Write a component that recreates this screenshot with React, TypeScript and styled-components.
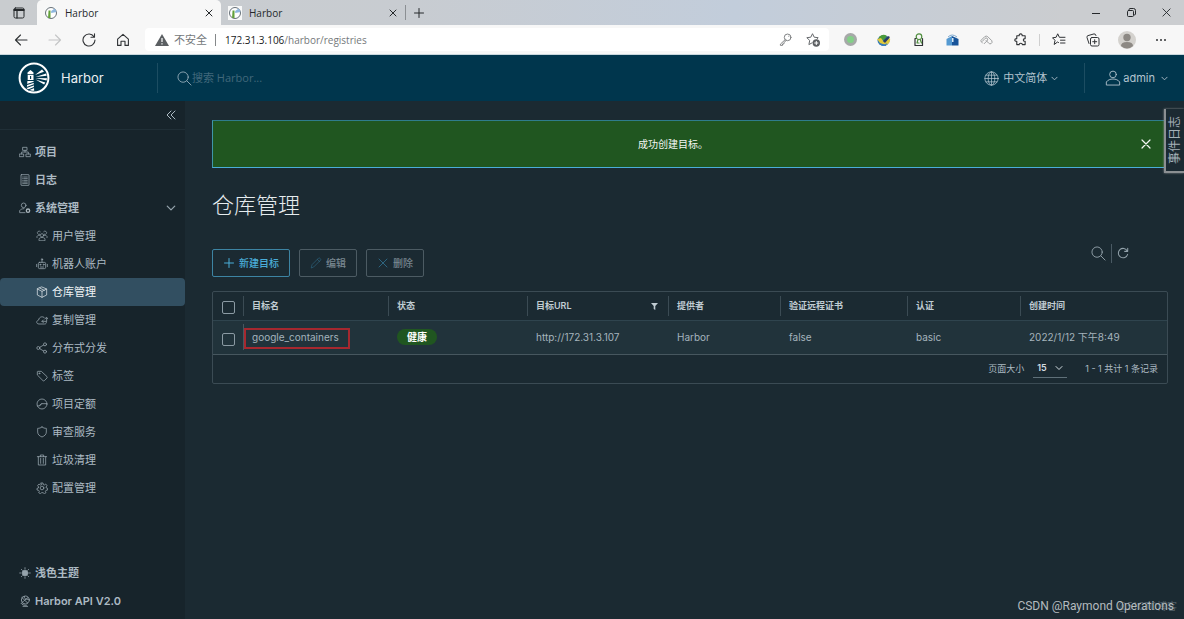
import React from 'react';
import styled, { createGlobalStyle } from 'styled-components';

const GlobalStyle = createGlobalStyle`
  *, *::before, *::after { box-sizing: border-box; }
  html, body, #root { min-height: 100%; }
  body {
    margin: 0;
    background: #1b2a32;
    color: #adbbc4;
    font: 11px/16px Inter, "Noto Sans CJK SC", sans-serif;
  }
  button, input, select { font: inherit; color: inherit; margin: 0; padding: 0; border: 0; background: none; }
  a { color: inherit; text-decoration: none; }
  ul { list-style: none; margin: 0; padding: 0; }
  svg { display: block; flex: none; }
`;

/* ---------- icons ---------- */

type IconProps = { size?: number; box?: number; stroke?: number; children: React.ReactNode };

const Icon = ({ size = 12, box = 36, stroke = 2, children }: IconProps) => (
  <svg
    width={size}
    height={size}
    viewBox={`0 0 ${box} ${box}`}
    fill="none"
    stroke="currentColor"
    strokeWidth={stroke}
    strokeLinecap="round"
    strokeLinejoin="round"
    aria-hidden="true"
  >
    {children}
  </svg>
);

const CloseIcon = ({ size = 8 }: { size?: number }) => (
  <Icon size={size} box={8} stroke={1}><path d="M1 1l6 6M7 1l-6 6" /></Icon>
);
const ChevronDown = ({ size = 8 }: { size?: number }) => (
  <Icon size={size} box={8} stroke={1}><path d="M1 2.5l3 3 3-3" /></Icon>
);
const PlusIcon = ({ size = 12 }: { size?: number }) => (
  <Icon size={size} box={12} stroke={1}><path d="M6 1.5v9M1.5 6h9" /></Icon>
);
const SearchIcon = ({ size = 16 }: { size?: number }) => (
  <Icon size={size} box={16} stroke={1}><circle cx="6.5" cy="6.5" r="5.5" /><path d="M10.6 10.6L15 15" /></Icon>
);
const RefreshIcon = () => (
  <Icon size={12} box={14} stroke={1.2}><path d="M12 4.6A5.5 5.5 0 1 0 12.4 8.6M12.5 1.5v3.6H8.9" /></Icon>
);

const icons: Record<string, React.ReactNode> = {
  projects: <Icon stroke={2.4}><rect x="12" y="4" width="12" height="9" /><rect x="2" y="24" width="12" height="8" /><rect x="22" y="24" width="12" height="8" /><path d="M18 13v5M8 24v-6h20v6" /></Icon>,
  logs: <Icon stroke={2.4}><rect x="6" y="2" width="24" height="32" rx="1" /><path d="M11 9h2M11 14h2M11 19h2M11 24h2M16 9h9M16 14h9M16 19h9M16 24h9M11 28h14" /></Icon>,
  admin: <Icon stroke={2.4}><circle cx="14" cy="10" r="7" /><path d="M18 32H2v-6c3-4 7-6 13-6" /><circle cx="27" cy="26" r="5" stroke="#c3ced5" strokeWidth="4" /></Icon>,
  users: <Icon stroke={2.2}><circle cx="18" cy="16" r="5" /><path d="M9 31v-5c5-5 13-5 18 0v5zM11 13a5 5 0 1 1 2-8M25 13a5 5 0 1 0-2-8M3 23v-4c2-3 5-3 8-3M33 23v-4c-2-3-5-3-8-3" /></Icon>,
  robot: <Icon stroke={2.4}><rect x="7" y="13" width="22" height="19" rx="4" /><path d="M18 13V6M2 19v7M34 19v7M13 27h10" /><circle cx="18" cy="4" r="2" /><circle cx="13" cy="20" r="1.5" /><circle cx="23" cy="20" r="1.5" /></Icon>,
  box: <Icon stroke={2.4}><path d="M18 3l14 6v18l-14 7-14-7V9zM4 9l14 7 14-7M18 16v18M11 6l14 7" /></Icon>,
  cloud: <Icon stroke={2.4}><path d="M31 23c1 4-1 7-5 7H9C0 30 0 20 8 18c1-10 13-13 18-6" /><path d="M18 22h14V12M27 14l5-4 3 4M22 18l-4 4 4 4" /></Icon>,
  share: <Icon stroke={2.4}><circle cx="27" cy="7" r="4.5" /><circle cx="27" cy="29" r="4.5" /><circle cx="7" cy="18" r="4.5" /><path d="M11 16l12-7M11 20l12 7" /></Icon>,
  tag: <Icon stroke={2.4}><path d="M4 6v9l17 17c1 1 3 1 4 0l8-8c1-1 1-3 0-4L16 4H6z" /><circle cx="10" cy="10" r="1.5" /></Icon>,
  quota: <Icon stroke={2.4}><circle cx="18" cy="18" r="15" /><path d="M4 24c8 1 9-6 13-7h15M17 17l-6 7" /></Icon>,
  shield: <Icon stroke={2.4}><path d="M18 3c4 3 8 4 13 4v11c0 8-6 12-13 15C11 30 5 26 5 18V7c5 0 9-1 13-4z" /></Icon>,
  trash: <Icon stroke={2.4}><path d="M4 8h28M7 8v25h22V8M13 8V3h10v5M14 13v15M22 13v15" /></Icon>,
  gear: <Icon stroke={2.4}><circle cx="18" cy="18" r="5.500" /><path d="M15 3h6l1 5 3 1 4-3 4 5-3 4 1 3 4 1v5l-5 1-2 3 2 4-5 3-4-3h-4l-4 3-5-3 2-4-2-3-5-1v-5l4-1 1-3-3-4 4-5 4 3 3-1z" /></Icon>,
  sun: <Icon stroke={2.4}><circle cx="18" cy="18" r="8.500" fill="currentColor" /><path d="M18 2v4M18 30v4M2 18h4M30 18h4M7 7l3 3M26 26l3 3M29 7l-3 3M10 26l-3 3" /></Icon>,
  api: <Icon stroke={2.6}><circle cx="19" cy="15" r="12" /><path d="M9 8l17 16M10 22c5-2 9-11 17-14M16 4c-2 8 6 10 14 9M6 25c4 6 12 6 16 6M12 34h14" /></Icon>,
};

const HarborLogo = () => (
  <svg width="32" height="32" viewBox="0 0 32 32" aria-hidden="true">
    <circle cx="16" cy="16" r="14.4" fill="none" stroke="#fff" strokeWidth="2" />
    <path fill="#fff" d="M12.500 8l3 2.600v1.600h-6v-1.600zM9.700 13h5.800v5H9.700zM9.400 19h6.200l.6 9.800c-3-.2-5.200-1-7.400-2.400z" />
    <path stroke="#00364d" strokeWidth="1.100" d="M12.600 14v3M9 22.600l7-2.400M8.600 25.600l7.600-2.800M10 28l6.200-2.600" fill="none" />
    <path fill="#fff" d="M17 13l7-5.400 2 2.200zM17.500 15l10.600-3.400.6 2.200zM17.500 16l11.500.2-.4 2.200zM17.500 17.400l9.800 3-1.200 2z" />
  </svg>
);

const Favicon = () => (
  <svg width="14" height="14" viewBox="0 0 14 14" aria-hidden="true">
    <rect width="14" height="14" fill="#f7f8f8" />
    <circle cx="7" cy="7" r="5.500" fill="#fff" stroke="#677078" strokeWidth="1" />
    <path d="M4.500 4.500h2V12h-2.400z" fill="#63a13b" />
    <path d="M7.200 5l3.500-2.600L12.600 6 7.200 7z" fill="#8db6dd" />
  </svg>
);

/* ---------- browser chrome ---------- */

const Page = styled.div`
  display: flex;
  flex-direction: column;
  min-height: 100vh;
`;

const TabStrip = styled.div`
  display: flex;
  align-items: stretch;
  height: 25px;
  color: #25282b;
  background: linear-gradient(90deg, #c9cccf 0%, #c8ccd1 35%, #c2cddb 62%, #cbcdd0 90%);
  font-family: "Open Sans", "Noto Sans CJK SC", sans-serif;
`;

const StripButton = styled.button<{ $width: number }>`
  display: flex;
  align-items: center;
  justify-content: center;
  width: ${p => p.$width}px;
`;

const Tab = styled.div<{ $active?: boolean }>`
  display: flex;
  align-items: center;
  gap: 7px;
  width: 184px;
  padding: 0 5px 0 7px;
  border-radius: 5px 5px 0 0;
  font-size: 10px;
  background: ${p => (p.$active ? '#f7f7f7' : 'transparent')};
  span { flex: 1; }
`;

const IconButton = styled.button`
  display: flex;
  align-items: center;
  justify-content: center;
  padding: 3px;
`;

const IconTool = styled.button`
  display: flex;
  align-items: center;
`;

const StripDivider = styled.span`
  width: 1px;
  height: 15px;
  align-self: center;
  background: #8b8f93;
`;

const Spacer = styled.div`
  flex: 1;
`;

const Toolbar = styled.div`
  display: flex;
  align-items: center;
  height: 30px;
  padding: 0 6px 0 4px;
  color: #303336;
  background: #f7f7f7;
  border-bottom: 1px solid #c9d7dd;
`;

const ToolButton = styled.button<{ $faded?: boolean }>`
  display: flex;
  align-items: center;
  justify-content: center;
  width: 34px;
  height: 24px;
  opacity: ${p => (p.$faded ? 0.25 : 1)};
`;

const ToolDivider = styled.span`
  width: 1px;
  height: 12px;
  margin: 0 2px;
  background: #cfcfcf;
`;

const AddressBar = styled.div`
  display: flex;
  flex: 1;
  align-items: center;
  height: 23px;
  margin: 0 4px 0 5px;
  padding: 0 9px 0 10px;
  border-radius: 4px;
  background: #fff;
  color: #74787b;
  font: 11px/16px "Open Sans", "Noto Sans CJK SC", sans-serif;
`;

const Unsafe = styled.span`
  margin-left: 5px;
`;

const AddressDivider = styled.span`
  width: 1px;
  height: 12px;
  margin: 0 9px 0 8px;
  background: #85888a;
`;

const Address = styled.span`
  flex: 1;
  font-size: 10px;
  b { font-weight: 400; color: #17191b; }
`;

const AddressActions = styled.span`
  display: flex;
  align-items: center;
  gap: 14px;
`;

/* ---------- application header ---------- */

const Header = styled.header`
  display: flex;
  align-items: center;
  height: 46px;
  padding: 0 16px 0 18px;
  background: #00364d;
  color: #b3c4cf;
`;

const Brand = styled.a`
  display: flex;
  align-items: center;
  gap: 11px;
  width: 139px;
  color: #e9eef1;
  font-size: 13px;
`;

const HeaderDivider = styled.span`
  width: 1px;
  height: 30px;
  background: #1c4d62;
`;

const SearchBox = styled.label`
  display: flex;
  flex: 1;
  align-items: center;
  margin-left: 19px;
  color: #8fa8b5;
  input {
    flex: 1;
    outline: none;
    font-family: "Open Sans", "Noto Sans CJK SC", sans-serif;
  }
  input::placeholder { color: #41687b; opacity: 1; }
`;

const HeaderMenu = styled.button`
  display: flex;
  align-items: center;
  gap: 4px;
  margin-right: 26px;
`;

const UserMenu = styled(HeaderMenu)`
  gap: 2px;
  margin: 0 0 0 20px;
  svg:last-child { margin-left: 4px; }
`;

/* ---------- layout ---------- */

const Body = styled.div`
  display: flex;
  flex: 1;
`;

const Sidebar = styled.nav`
  display: flex;
  flex-direction: column;
  width: 185px;
  flex: none;
  padding-bottom: 4px;
  background: #17242b;
`;

const CollapseRow = styled.div`
  display: flex;
  align-items: center;
  justify-content: flex-end;
  height: 29px;
  padding-right: 6px;
  margin-bottom: 8px;
  border-bottom: 1px solid #202f37;
`;

const NavLink = styled.a<{ $child?: boolean; $active?: boolean }>`
  display: flex;
  align-items: center;
  gap: 4px;
  height: 28px;
  padding: 0 9px 0 ${p => (p.$child ? 36 : 19)}px;
  border-radius: 4px;
  font-weight: ${p => (p.$child ? 400 : 600)};
  color: ${p => (p.$active ? '#f0f4f6' : '#acbac3')};
  background: ${p => (p.$active ? '#324f61' : 'transparent')};
  svg { opacity: 0.85; }
  span { flex: 1; }
`;

const Main = styled.main`
  flex: 1;
  min-width: 0;
  padding: 19px 16px 24px 27px;
`;

const Alert = styled.div`
  display: flex;
  align-items: center;
  height: 48px;
  padding: 0 13px;
  border: 1px solid #3f96a8;
  border-top-color: #2f7c8c;
  border-bottom-color: #4aaed9;
  background: #205620;
  color: #f4f7f4;
  font-size: 10px;
  p { flex: 1; margin: 0; padding-right: 18px; text-align: center; }
`;

const Title = styled.h1`
  margin: 19px 0 0;
  color: #e6ecef;
  font: 300 22px/32px "Noto Sans CJK SC", sans-serif;
`;

const Actions = styled.div`
  display: flex;
  gap: 9px;
  margin: 30px 0 14px;
`;

const ActionButton = styled.button`
  display: flex;
  align-items: center;
  gap: 4px;
  height: 28px;
  padding: 0 10px;
  border: 1px solid #3d84a3;
  border-radius: 2px;
  color: #4aaed9;
  font-size: 10px;
  font-weight: 500;
  &:disabled {
    border-color: #4c5b63;
    color: #788690;
    svg { color: #2d6580; }
  }
`;

const GridTools = styled.div`
  display: flex;
  align-items: center;
  align-self: flex-start;
  gap: 5px;
  height: 20px;
  margin: -6px 39px 0 auto;
  color: #93a2ab;
`;

const ToolsDivider = styled.span`
  width: 1px;
  height: 19px;
  background: #4a5a64;
`;

const DataGrid = styled.section`
  border: 1px solid #3b4b54;
  border-radius: 2px;
`;

const Table = styled.table`
  width: 100%;
  table-layout: fixed;
  border-collapse: collapse;
`;

const HeadCell = styled.th`
  height: 28px;
  padding: 0;
  text-align: left;
  font-size: 9px;
  font-weight: 600;
  color: #c0ccd3;
`;

const HeadInner = styled.div`
  display: flex;
  align-items: center;
  justify-content: space-between;
  height: 20px;
  padding: 0 10px 0 8px;
  border-left: 1px solid #3b4b54;
`;

const DataRow = styled.tr`
  border-top: 1px solid #2f444e;
  border-bottom: 1px solid #47575f;
  background: #21333b;
`;

const DataCell = styled.td`
  height: 34px;
  padding: 0 0 0 9px;
  color: #a5b4bd;
  font-size: 10px;
`;

const NameCell = styled(DataCell)`
  padding: 0;
`;

const NameInner = styled.div`
  position: relative;
  display: flex;
  align-items: center;
  height: 26px;
  padding-left: 8px;
  border-left: 1px solid #47575f;
  &::after {
    content: "";
    position: absolute;
    top: 4px;
    left: 0;
    width: 106px;
    height: 21px;
    border: 2px solid #a6282f;
  }
`;

const Checkbox = styled.input`
  &&& {
    appearance: none;
    display: block;
    width: 13px;
    height: 13px;
    margin: 4px 0 0 9px;
    border: 1px solid #8b9aa3;
    border-radius: 2px;
  }
  &&&:checked { background: #4aaed9; }
`;

const Badge = styled.span`
  display: inline-block;
  padding: 0 10px;
  border-radius: 8px;
  background: #205620;
  color: #fff;
  font-weight: 600;
`;

const GridFooter = styled.div`
  display: flex;
  align-items: center;
  justify-content: flex-end;
  height: 28px;
  padding: 0 9px;
  font-size: 9px;
`;

const PageSize = styled.label`
  display: flex;
  align-items: center;
  gap: 9px;
  margin-right: 18px;
`;

const SelectWrap = styled.span`
  display: flex;
  align-items: center;
  width: 34px;
  border-bottom: 1px solid #5f7079;
  color: #d3dce1;
  select {
    appearance: none;
    flex: 1;
    height: 18px;
    padding-left: 4px;
    font-size: 9px;
    font-weight: 600;
    outline: none;
  }
  svg { margin-right: 4px; pointer-events: none; }
`;

const EventTab = styled.button`
  &&& {
    position: absolute;
    top: 109px;
    right: 0;
    width: 20px;
    height: 64px;
    border: 2px solid #8b8f92;
    border-width: 0 0 2px 2px;
    background: #1b2a32;
    color: #a5b1b8;
    box-shadow: 0 0 2px #8b8f92;
  }
  span {
    display: block;
    writing-mode: vertical-rl;
    text-orientation: sideways;
    transform: rotate(180deg);
    font-size: 12px;
    line-height: 18px;
    text-align: center;
  }
`;

const Watermark = styled.div<{ $faint?: boolean }>`
  position: absolute;
  right: ${p => (p.$faint ? 7 : 10)}px;
  bottom: ${p => (p.$faint ? 4 : 5)}px;
  color: ${p => (p.$faint ? '#526069' : '#b4bbbf')};
  font: ${p => (p.$faint ? 10 : 12)}px/16px Roboto, "Noto Sans CJK SC", sans-serif;
`;

const systemLinks: [string, string][] = [
  ['users', '用户管理'], ['robot', '机器人账户'], ['box', '仓库管理'], ['cloud', '复制管理'],
  ['share', '分布式分发'], ['tag', '标签'], ['quota', '项目定额'], ['shield', '审查服务'],
  ['trash', '垃圾清理'], ['gear', '配置管理'],
];

const headings = ['目标名', '状态', '目标URL', '提供者', '验证远程证书', '认证', '创建时间'];
const columnWidths = [30, 145, 139, 141, 112, 127, 113];

const Browser = () => (
  <>
    <TabStrip>
      <StripButton $width={37} aria-label="标签页操作">
        <Icon size={12} box={12} stroke={1}><rect x="1" y="1" width="10" height="10" rx="1.500" /><path d="M1 2.500h10M1 3.500h10M4 4v7" strokeWidth="1.200" /></Icon>
      </StripButton>
      <Tab $active><Favicon /><span>Harbor</span><IconButton aria-label="关闭标签页"><CloseIcon /></IconButton></Tab>
      <Tab><Favicon /><span>Harbor</span><IconButton aria-label="关闭标签页"><CloseIcon /></IconButton></Tab>
      <StripDivider />
      <StripButton $width={26} aria-label="新建标签页"><PlusIcon /></StripButton>
      <Spacer />
      <StripButton $width={35} aria-label="最小化"><Icon size={8} box={8} stroke={1}><path d="M0 4.500h8" /></Icon></StripButton>
      <StripButton $width={35} aria-label="还原"><Icon size={10} box={10} stroke={1}><rect x="1.500" y="2.500" width="6" height="6" rx="1" /><path d="M3 1.500q0-1 1-1h3.500q2 0 2 2V6q0 1-1 1" /></Icon></StripButton>
      <StripButton $width={36} aria-label="关闭"><Icon size={9} box={10} stroke={1}><path d="M1 1l8 8M9 1L1 9" /></Icon></StripButton>
    </TabStrip>
    <Toolbar>
      <ToolButton aria-label="后退"><Icon size={14} box={14} stroke={1.1}><path d="M13 7H1.500M6.500 2l-5 5 5 5" /></Icon></ToolButton>
      <ToolButton $faded aria-label="前进"><Icon size={14} box={14} stroke={1.1}><path d="M1 7h11.500M7.500 2l5 5-5 5" /></Icon></ToolButton>
      <ToolButton aria-label="刷新"><Icon size={14} box={14} stroke={1.1}><path d="M12 3.700A6 6 0 1 0 13 7M12.500 .8v3.400H9" /></Icon></ToolButton>
      <ToolButton aria-label="主页"><Icon size={14} box={14} stroke={1.1}><path d="M1.600 6.200L7 1.300l5.400 4.900v6.200H9V8.300H5v4.100H1.600z" /></Icon></ToolButton>
      <AddressBar>
        <svg width="14" height="12" viewBox="0 0 14 12" aria-hidden="true">
          <path d="M7 0l7 12H0z" fill="#5b5f62" /><path d="M7 4v4M7 9.200v1.400" stroke="#fff" strokeWidth="1.200" />
        </svg>
        <Unsafe>不安全</Unsafe>
        <AddressDivider />
        <Address><b>172.31.3.106</b>/harbor/registries</Address>
        <AddressActions>
          <Icon box={14} size={13} stroke={1}><g stroke="#77797b"><circle cx="9.300" cy="4.700" r="3.600" /><path d="M6.600 7.200L1.500 12v1.300h2.300v-1.500h1.500v-1.500L7.800 8M10.500 3.500h.1" /></g></Icon>
          <svg width="14" height="14" viewBox="0 0 14 14" fill="none" aria-hidden="true">
            <path d="M6.500 9.600l-3.600 2 .8-4.200L.8 4.700l4-.5L6.500.7l1.700 3.500 4 .5-1.500 1.400" stroke="#66696c" />
            <circle cx="10.300" cy="10" r="3.700" fill="#5d6063" /><path d="M10.300 8v4M8.300 10h4" stroke="#fff" />
          </svg>
        </AddressActions>
      </AddressBar>
      <ToolButton aria-label="录制"><svg width="13" height="13" viewBox="0 0 13 13"><circle cx="6.500" cy="6.500" r="6.500" fill="#a6a9a8" /><circle cx="6.500" cy="6.500" r="3.500" fill="#83cf88" /></svg></ToolButton>
      <ToolButton aria-label="下载管理器">
        <svg width="14" height="12" viewBox="0 0 14 12">
          <ellipse cx="6.500" cy="6.500" rx="6" ry="5.200" fill="#2f78b8" /><path d="M2 3q4-4 8-1L7 6 2 5z" fill="#4a9a3a" /><path d="M0 5l4-1 3 4 6-4q1 5-4 7l-6-2z" fill="#e0c93c" /><path d="M6 7l5-5 2 1-5 6z" fill="#2b3f63" /><path d="M3 10q4 2 7-1l-1 3H5z" fill="#3c7fc0" />
        </svg>
      </ToolButton>
      <ToolButton aria-label="用户脚本"><Icon size={13} box={13} stroke={1.2}><path d="M4.500 5.500H3v7h7.500v-7" /><g stroke="#4e8d3d"><circle cx="7" cy="3.700" r="2.800" /><path d="M6 6.500L5 10M8.200 6.500L9.500 10M5 10h2" /></g></Icon></ToolButton>
      <ToolButton aria-label="工具箱">
        <svg width="13" height="12" viewBox="0 0 13 12"><path d="M2 3q4-4 9 0" fill="none" stroke="#7da8cf" /><path d="M.5 5L6 2v9.500H.5z" fill="#559ad2" /><path d="M6 2l6.500 3v6.500H6z" fill="#17549a" /><path d="M6 4h1.500v4H6z" fill="#d7e8f5" /></svg>
      </ToolButton>
      <ToolButton aria-label="链接"><Icon size={13} box={14} stroke={1}><g stroke="#97999b"><path d="M2.500 10.500q-2-1-1.500-2.500l4-4q1.700-1.400 3.400 0l4.300 4.300q1 2-.8 3.200-1.400.6-2.600-.6L6.500 8M4.500 11.500L8 8q.8-1.500-.5-2.500-1-.5-2 .3L2.500 9" /></g></Icon></ToolButton>
      <ToolButton aria-label="扩展"><Icon size={13} box={14} stroke={1.2}><path d="M3 3h2.500q0-2 1.700-2t1.600 2H12v3q-2 0-2 1.500T12 9v3.500H9q0-1.500-1.700-1.500t-1.800 1.500H3V9Q.8 9 .8 7.500T3 6z" /></Icon></ToolButton>
      <ToolDivider />
      <ToolButton aria-label="收藏夹"><Icon size={14} box={14} stroke={1}><path d="M6.500 9.500L5.500 9l-3.300 2.500.8-4.200L.5 4.800l3.600-.5L5.700.8l1.700 3.500H13M8.500 7.200H13M8.500 10H13" /></Icon></ToolButton>
      <ToolButton aria-label="集锦"><Icon size={14} box={14} stroke={1}><rect x="4.500" y="4.500" width="8.500" height="8.500" rx="1.500" /><path d="M8.700 6.700v4M6.700 8.700h4M3 10.500L1 4.500Q.6 3 2 2.600L8 .9q1.400-.4 2 1.600" /></Icon></ToolButton>
      <ToolButton aria-label="个人资料"><svg width="18" height="18" viewBox="0 0 18 18"><circle cx="9" cy="9" r="9" fill="#d4d2ce" /><circle cx="9" cy="6.500" r="3.700" fill="#8d8984" /><path d="M3 15q0-4 6-4t6 4q-6 5-12 0z" fill="#8d8984" /></svg></ToolButton>
      <ToolButton aria-label="更多"><svg width="12" height="4" viewBox="0 0 12 4" fill="#303336"><circle cx="2" cy="2" r="1" /><circle cx="6" cy="2" r="1" /><circle cx="10" cy="2" r="1" /></svg></ToolButton>
    </Toolbar>
  </>
);

export default function App() {
  return (
    <Page>
      <GlobalStyle />
      <Browser />
      <Header>
        <Brand href="#"><HarborLogo />Harbor</Brand>
        <HeaderDivider />
        <SearchBox><SearchIcon size={15} /><input type="search" aria-label="搜索" placeholder="搜索 Harbor..." /></SearchBox>
        <HeaderMenu>
          <Icon size={15} stroke={1.8}><circle cx="18" cy="18" r="16" /><ellipse cx="18" cy="18" rx="8" ry="16" /><path d="M2 18h32M5 10h26M5 26h26M18 2v32" /></Icon>
          中文简体<ChevronDown size={7} />
        </HeaderMenu>
        <HeaderDivider />
        <UserMenu>
          <Icon size={16} stroke={2}><circle cx="18" cy="10" r="7.500" /><path d="M3 33v-6c6-9 24-9 30 0v6z" /></Icon>
          admin<ChevronDown size={7} />
        </UserMenu>
      </Header>
      <Body>
        <Sidebar>
          <CollapseRow>
            <IconButton aria-label="收起侧栏"><Icon size={10} box={10} stroke={1}><path d="M5 1L1 5l4 4M9 1L5 5l4 4" /></Icon></IconButton>
          </CollapseRow>
          <NavLink href="#projects">{icons.projects}<span>项目</span></NavLink>
          <NavLink href="#logs">{icons.logs}<span>日志</span></NavLink>
          <NavLink href="#admin">{icons.admin}<span>系统管理</span><ChevronDown size={10} /></NavLink>
          <ul>
            {systemLinks.map(([icon, label]) => (
              <li key={icon}><NavLink $child $active={icon === 'box'} href={`#${icon}`}>{icons[icon]}<span>{label}</span></NavLink></li>
            ))}
          </ul>
          <Spacer />
          <NavLink href="#theme">{icons.sun}<span>浅色主题</span></NavLink>
          <NavLink href="#api">{icons.api}<span>Harbor API V2.0</span></NavLink>
        </Sidebar>
        <Main>
          <Alert role="alert"><p>成功创建目标。</p><IconButton aria-label="关闭提示"><Icon size={10} box={10} stroke={1.2}><path d="M1 1l8 8M9 1L1 9" /></Icon></IconButton></Alert>
          <Title>仓库管理</Title>
          <Actions>
            <ActionButton><PlusIcon />新建目标</ActionButton>
            <ActionButton disabled><Icon size={12}><path d="M4 32l2-9L26 3c2-2 8 4 6 6L12 29zM22 7l7 7" /></Icon>编辑</ActionButton>
            <ActionButton disabled><Icon size={12} box={12} stroke={1}><path d="M2 2l8 8M10 2l-8 8" /></Icon>删除</ActionButton>
            <GridTools>
              <IconTool aria-label="搜索目标"><SearchIcon size={15} /></IconTool>
              <ToolsDivider />
              <IconTool aria-label="刷新列表"><RefreshIcon /></IconTool>
            </GridTools>
          </Actions>
          <DataGrid>
            <Table>
              <colgroup>
                {columnWidths.map((w, i) => <col key={i} width={w} />)}
                <col />
              </colgroup>
              <thead>
                <tr>
                  <HeadCell><Checkbox type="checkbox" aria-label="全选" /></HeadCell>
                  {headings.map(h => (
                    <HeadCell key={h} scope="col">
                      <HeadInner>
                        {h}
                        {h === '目标URL' && <IconTool aria-label="筛选目标URL"><svg width="8" height="8" viewBox="0 0 8 8"><path d="M1 1h7L5.300 4v4L3.700 7V4z" fill="currentColor" /></svg></IconTool>}
                      </HeadInner>
                    </HeadCell>
                  ))}
                </tr>
              </thead>
              <tbody>
                <DataRow>
                  <NameCell><Checkbox type="checkbox" aria-label="选择 google_containers" /></NameCell>
                  <NameCell><NameInner>google_containers</NameInner></NameCell>
                  <DataCell><Badge>健康</Badge></DataCell>
                  <DataCell>http://172.31.3.107</DataCell>
                  <DataCell>Harbor</DataCell>
                  <DataCell>false</DataCell>
                  <DataCell>basic</DataCell>
                  <DataCell>2022/1/12 下午8:49</DataCell>
                </DataRow>
              </tbody>
            </Table>
            <GridFooter>
              <PageSize>
                页面大小
                <SelectWrap><select defaultValue="15"><option>15</option><option>25</option><option>50</option></select><ChevronDown /></SelectWrap>
              </PageSize>
              1 - 1 共计 1 条记录
            </GridFooter>
          </DataGrid>
        </Main>
      </Body>
      <EventTab><span>事件日志</span></EventTab>
      <Watermark $faint>@51CTO博客</Watermark>
      <Watermark>CSDN @Raymond Operations</Watermark>
    </Page>
  );
}
